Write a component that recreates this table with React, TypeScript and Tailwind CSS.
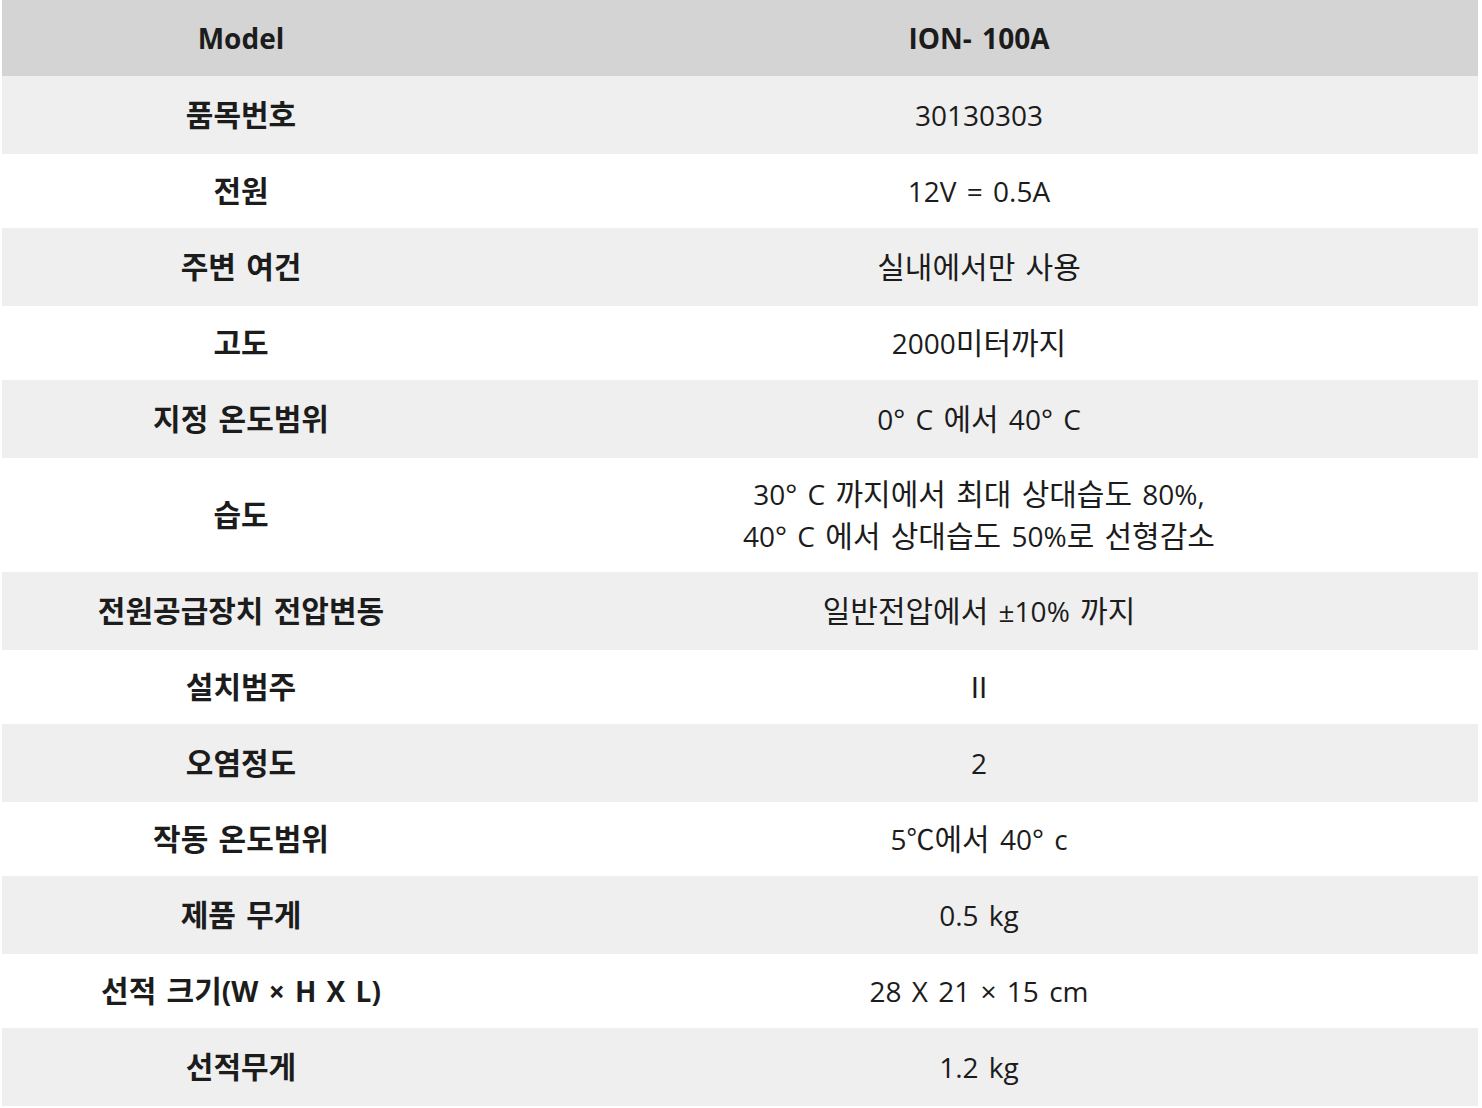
import React from "react";

type Row = {
    label: string;
    value: string[];
    height: string;
    bg: string;
};

const rows: Row[] = [
    { label: "품목번호", value: ["30130303"], height: "h-[78px]", bg: "bg-[#efefef]" },
    { label: "전원", value: ["12V = 0.5A"], height: "h-[74px]", bg: "bg-white" },
    { label: "주변 여건", value: ["실내에서만 사용"], height: "h-[78px]", bg: "bg-[#efefef]" },
    { label: "고도", value: ["2000미터까지"], height: "h-[74px]", bg: "bg-white" },
    { label: "지정 온도범위", value: ["0° C 에서 40° C"], height: "h-[78px]", bg: "bg-[#efefef]" },
    {
        label: "습도",
        value: ["30° C 까지에서 최대 상대습도 80%,", "40° C 에서 상대습도 50%로 선형감소"],
        height: "h-[114px]",
        bg: "bg-white",
    },
    { label: "전원공급장치 전압변동", value: ["일반전압에서 ±10% 까지"], height: "h-[78px]", bg: "bg-[#efefef]" },
    { label: "설치범주", value: ["Ⅱ"], height: "h-[74px]", bg: "bg-white" },
    { label: "오염정도", value: ["2"], height: "h-[78px]", bg: "bg-[#efefef]" },
    { label: "작동 온도범위", value: ["5℃에서 40° c"], height: "h-[74px]", bg: "bg-white" },
    { label: "제품 무게", value: ["0.5 kg"], height: "h-[78px]", bg: "bg-[#efefef]" },
    { label: "선적 크기(W × H X L)", value: ["28 X 21 × 15 cm"], height: "h-[74px]", bg: "bg-white" },
    { label: "선적무게", value: ["1.2 kg"], height: "h-[78px]", bg: "bg-[#efefef]" },
];

// hangul runs are set a little larger than the latin text, as in the source sheet
const withHangul = (text: string) =>
    text.split(/([\uac00-\ud7a3]+)/).map((part, i) =>
        /[\uac00-\ud7a3]/.test(part) ? (
            <span key={i} className="text-[30px]">
                {part}
            </span>
        ) : (
            <React.Fragment key={i}>{part}</React.Fragment>
        )
    );

const App = () => {
    return (
        <div className="min-h-screen bg-white px-[2px] font-['Open_Sans','Noto_Sans_CJK_KR',sans-serif] text-[28px] text-[#1c1c1c] [word-spacing:3px]">
            <div className="w-[1476px]">
                <div className="flex h-[76px] bg-[#d4d4d4] font-bold">
                    <div className="flex w-[478px] items-center justify-center">Model</div>
                    <div className="flex flex-1 items-center justify-center">ION- 100A</div>
                </div>
                {rows.map((row) => (
                    <div key={row.label} className={`flex ${row.height} ${row.bg}`}>
                        <div className="flex w-[478px] items-center justify-center font-bold leading-[40px]">
                            <div>{withHangul(row.label)}</div>
                        </div>
                        <div className="flex flex-1 flex-col items-center justify-center text-center leading-[42px]">
                            {row.value.map((line) => (
                                <div key={line}>{withHangul(line)}</div>
                            ))}
                        </div>
                    </div>
                ))}
            </div>
        </div>
    );
};

export default App;
